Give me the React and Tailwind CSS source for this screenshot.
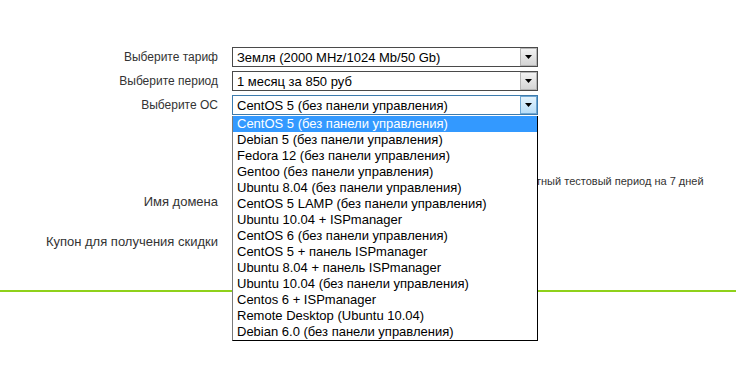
const osList = [
  "CentOS 5 (без панели управления)",
  "Debian 5 (без панели управления)",
  "Fedora 12 (без панели управления)",
  "Gentoo (без панели управления)",
  "Ubuntu 8.04 (без панели управления)",
  "CentOS 5 LAMP (без панели управления)",
  "Ubuntu 10.04 + ISPmanager",
  "CentOS 6 (без панели управления)",
  "CentOS 5 + панель ISPmanager",
  "Ubuntu 8.04 + панель ISPmanager",
  "Ubuntu 10.04 (без панели управления)",
  "Centos 6 + ISPmanager",
  "Remote Desktop (Ubuntu 10.04)",
  "Debian 6.0 (без панели управления)",
]

function Arrow({ focused }) {
  return (
    <div
      className={
        "w-[17px] h-[18px] flex items-center justify-center border " +
        (focused
          ? "bg-gradient-to-b from-[#e4f3fd] to-[#b9def8] border-[#6fa7d3]"
          : "bg-gradient-to-b from-[#f2f2f2] to-[#d5d5d5] border-[#b5b5b5]")
      }
    >
      <svg width="7" height="4" viewBox="0 0 7 4">
        <path d="M0 0h7L3.5 4z" fill="#000" />
      </svg>
    </div>
  )
}

function Select({ value, focused }) {
  return (
    <div
      className={
        "w-[306px] h-[20px] flex items-center justify-between border bg-white " +
        (focused ? "border-[#3d7bad]" : "border-[#4a4a4a]")
      }
    >
      <span className="pl-[4px] text-[13px] text-black leading-none">{value}</span>
      <Arrow focused={focused} />
    </div>
  )
}

function Row({ label, children, small, className = "" }) {
  return (
    <div className={"flex items-center gap-[14px] " + className}>
      <div className={"w-[218px] text-right text-[#333] " + (small ? "text-[12px]" : "text-[13px]")}>
        {label}
      </div>
      {children}
    </div>
  )
}

export default function App() {
  return (
    <div className="w-[736px] h-[378px] bg-white font-['Liberation_Sans',Arial,sans-serif] pt-[47px]">
      <div className="flex flex-col gap-[4px]">
        <Row label="Выберите тариф" small>
          <Select value="Земля (2000 MHz/1024 Mb/50 Gb)" />
        </Row>
        <Row label="Выберите период" small>
          <Select value="1 месяц за 850 руб" />
        </Row>
        <Row label="Выберите ОС" small>
          <div className="relative">
            <Select value="CentOS 5 (без панели управления)" focused />
            <ul className="absolute left-0 top-[21px] w-[306px] z-10 bg-white border border-black border-l-[#7a7a7a] border-t-0">
              {osList.map((os, i) => (
                <li
                  key={os}
                  className={
                    "h-[16px] pl-[4px] text-[13px] leading-[16px] whitespace-nowrap " +
                    (i === 0 ? "bg-[#3399ff] text-white" : "text-black")
                  }
                >
                  {os}
                </li>
              ))}
            </ul>
          </div>
        </Row>
      </div>

      <div className="flex items-center gap-[14px] mt-[56px] h-[20px]">
        <div className="w-[218px]" />
        <div className="flex items-center text-[11px] text-[#333]">
          <span className="w-[304px]" />
          <span>тный тестовый период на 7 дней</span>
        </div>
      </div>

      <Row label="Имя домена" className="mt-[1px] h-[20px]">
        <div className="w-[306px] h-[20px]" />
      </Row>

      <Row label="Купон для получения скидки" className="mt-[20px] h-[20px]">
        <div className="w-[306px] h-[20px]" />
      </Row>

      <div className="mt-[38px] h-[2px] bg-[#8fd11a]" />
    </div>
  )
}
